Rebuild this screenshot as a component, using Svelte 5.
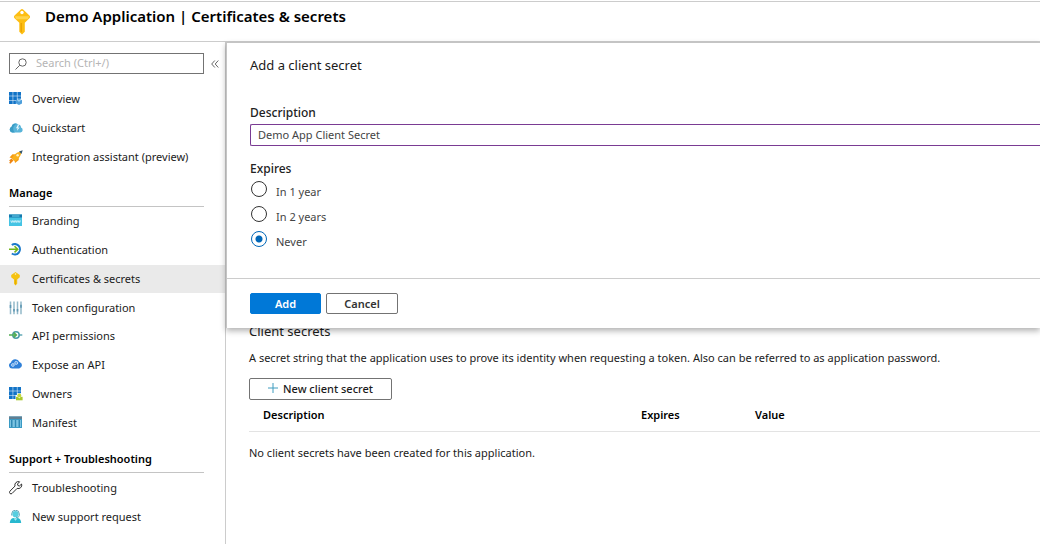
<script>
  const general = [
    { icon: 'overview', label: 'Overview' },
    { icon: 'cloud', label: 'Quickstart' },
    { icon: 'rocket', label: 'Integration assistant (preview)' }
  ];
  const manage = [
    { icon: 'www', label: 'Branding' },
    { icon: 'auth', label: 'Authentication' },
    { icon: 'key', label: 'Certificates & secrets', active: true },
    { icon: 'token', label: 'Token configuration' },
    { icon: 'api', label: 'API permissions' },
    { icon: 'expose', label: 'Expose an API' },
    { icon: 'owners', label: 'Owners' },
    { icon: 'manifest', label: 'Manifest' }
  ];
  const support = [
    { icon: 'wrench', label: 'Troubleshooting' },
    { icon: 'person', label: 'New support request' }
  ];
  const periods = ['In 1 year', 'In 2 years', 'Never'];

  let search = $state('');
  let description = $state('Demo App Client Secret');
  let expires = $state('Never');
</script>

{#snippet glyph(name)}
  <svg class="glyph" viewBox="0 0 14 14" aria-hidden="true">
    {#if name === 'overview' || name === 'owners'}
      <path fill="#1173c7" d="M0 0h3.700v3.700H0zM4.200 0h3.700v3.700H4.200zM8.400 0h3.600v3.700H8.400zM0 4.200h3.700v3.700H0zM4.200 4.200h3.700v3.700H4.200zM0 8.400h3.700v3.600H0z" />
      {#if name === 'overview'}
        <path fill="#1173c7" d="M8.400 4.200H12v2.600H8.400zM4.200 8.400h2.700v3.600H4.200z" />
        <path fill="#4e9fdb" d="M10 6.700l3 1.600v3.200L10 13.100l-3-1.600V8.300z" />
        <path fill="#9bd0f2" d="M10 7.600l2 1-2 1.100-2-1.100z" />
      {:else}
        <path fill="#1173c7" d="M8.400 4.200H12v2H8.400zM4.200 8.400h2.300v3.600H4.200z" />
        <path fill="#a9c82c" d="M7 13.300V9.800h6.600v3.500z" />
        <circle cx="10.300" cy="8.400" r="2" fill="#c3d83e" />
        <path fill="#eef5b5" d="M9 10h2.600l-1.300 1.600z" />
      {/if}
    {:else if name === 'cloud'}
      <path fill="#59b4d9" d="M3 11.500a3 3 0 0 1-.4-5.700A3.600 3.600 0 0 1 9 3.600 3 3 0 0 1 12 6.500a2.600 2.600 0 0 1-.5 5z" />
      <path fill="#3a9cc5" d="M3 11.500a3 3 0 0 1-.4-5.700A3.600 3.600 0 0 1 7.500 3 5 5 0 0 0 6 11.500z" />
      <path fill="#e8f6fc" d="M9 3.500L7 7.300h1.600L7.800 10l2.900-3.600H9L10.300 3.500z" />
    {:else if name === 'rocket'}
      <path fill="#f59b13" d="M.5 7.500l3-3.300 4 .2L3.800 8.600zM9.600 6.500l.2 3.500L6 13l-.6-3.500z" />
      <path fill="#f9b01c" d="M2.700 8.500C4.700 4.800 8 1.700 12.300 1.500 12.200 6 9.500 9.300 5.700 11.300z" />
      <path fill="#33566e" d="M10 1.400L13.700.2 12.500 4z" />
      <circle cx="8.600" cy="5.200" r="1.200" fill="#fff4c5" />
      <path stroke="#ee8412" stroke-width="1.600" d="M4 10L.7 13.300M3 9L.7 11.200" />
    {:else if name === 'www'}
      <path fill="#45c4e4" d="M0 .5h13v11.500H0z" />
      <path fill="#1778ad" d="M0 .5h13v3H0z" />
      <path fill="#4fb4d8" d="M3 1.200h7.500v1.600H3z" />
      <path fill="none" stroke="#d9f5fb" stroke-width=".8" d="M1.700 6.500l.8 2 .8-2 .8 2 .8-2M5.200 6.500l.6 2 .8-2 .8 2 .6-2M8.300 6.500l.8 2 .8-2 .8 2 .8-2" />
    {:else if name === 'auth'}
      <path fill="none" stroke="#1b7acb" stroke-width="2" d="M2.800 2A5.200 5.200 0 1 1 2.800 10.500" />
      <path fill="none" stroke="#72b51b" stroke-width="1.600" d="M0 6.300h8.500M5.500 3.200l3.200 3.100-3.200 3.100" />
    {:else if name === 'key'}
      <path fill="#f5c211" d="M6.500 0L10.800 3v2.200L8.200 7.500v4.300L6.500 13.500 5 11.800V7.500L2.200 5.200V3z" />
      <path fill="#dda400" d="M6 7.600h.7v5H6z" />
      <circle cx="6.500" cy="2" r=".8" fill="#fff6ce" />
    {:else if name === 'token'}
      <path stroke="#93b9c9" stroke-width="1.500" d="M1.500.5v12.700M5 .5v12.700M8.500.5v12.700M12 .5v12.700" />
      <path fill="#5e96b2" d="M.7 4h1.600v3H.7zM4.200 8h1.600v2.500H4.200zM7.700 8h1.600v2.500H7.700zM11.200 3.700h1.600v3h-1.600z" />
    {:else if name === 'api'}
      <circle cx="7" cy="6" r="3.200" fill="none" stroke="#4a9baa" stroke-width="1.500" />
      <path fill="none" stroke="#52ad54" stroke-width="1.500" d="M0 6h7M4.700 3.600L7.400 6 4.700 8.400" />
      <path stroke="#4a9baa" stroke-width="1.300" d="M10 6h3.300" />
    {:else if name === 'expose'}
      <path fill="#2f80d8" d="M3.100 10.500A3.100 3.100 0 0 1 2 4.500 4.600 4.600 0 0 1 10.500 3.900 3.400 3.400 0 0 1 10.200 10.500z" />
      <circle cx="3.900" cy="7" r="1.400" fill="#5d9fe8" stroke="#d5e8fb" stroke-width=".8" />
      <circle cx="7.200" cy="4.900" r="1.500" fill="#5d9fe8" stroke="#d5e8fb" stroke-width=".8" />
    {:else if name === 'manifest'}
      <path fill="#399ac4" d="M0 .5h13v11.500H0z" />
      <path fill="#617f92" d="M0 .5h13v2.500H0z" />
      <path fill="#7cc4e2" d="M1 4h11v7H1z" />
      <path fill="#2e88b4" d="M2 4h1.500v7H2zM5.800 4h1.400v7H5.800zM9.500 4h1.500v7H9.500z" />
    {:else if name === 'wrench'}
      <path fill="none" stroke="#303030" stroke-width="1" stroke-linejoin="round" d="M12.600 3l-2.200 2-1.500-.5L8.500 3l2.100-2.200A3.500 3.500 0 0 0 6 5.100L.9 10.200a1.500 1.500 0 0 0 2.200 2.200l5-5A3.500 3.500 0 0 0 12.600 3z" />
    {:else if name === 'person'}
      <path fill="#28b8cf" d="M.8 13c.2-3 1.500-4.400 3.400-4.900h4.600c2 .5 3.200 1.900 3.400 4.900z" />
      <circle cx="6.500" cy="4.200" r="3.100" fill="#58cee0" />
      <path fill="none" stroke="#5fa9bd" stroke-width="1" d="M2.700 5.500V4a3.800 3.800 0 0 1 7.600 0v1.500M10.300 5.500C10 7.300 8.500 7.600 7 7.600" />
      <path fill="#a7e9f0" d="M4.500 8.200h4l-2 2.500z" />
    {/if}
  </svg>
{/snippet}

{#snippet menu(items, kind)}
  <ul class={kind}>
    {#each items as item}
      <li class:active={item.active}>
        <a href="#{item.icon}" aria-current={item.active ? 'page' : undefined}>
          {@render glyph(item.icon)}
          {item.label}
        </a>
      </li>
    {/each}
  </ul>
{/snippet}

<div class="page">
  <header>
    <svg class="logo" viewBox="0 0 18 26" aria-hidden="true">
      <path fill="#fdbe12" d="M7.600.8a2 2 0 0 1 2.800 0l5.800 5.400a2.400 2.400 0 0 1 0 3.400l-4.400 4.200v9L9 25.600l-2.700-2.800v-9L1.800 9.600a2.400 2.400 0 0 1 0-3.400z" />
      <path fill="#ffd54a" d="M2 7.200h14l-1 3H3z" />
      <path fill="#e29a00" d="M7.700 14h1v9.500l-1-1z" />
      <circle cx="9" cy="3.500" r="1.700" fill="#fff" />
    </svg>
    <h1>Demo Application | Certificates &amp; secrets</h1>
  </header>

  <div class="body">
    <nav aria-label="Application">
      <div class="tools">
        <label class="search">
          <svg viewBox="0 0 12 12" aria-hidden="true">
            <circle cx="7.500" cy="4.500" r="3.700" />
            <path d="M4.800 7.200L.5 11.500" />
          </svg>
          <input type="text" placeholder="Search (Ctrl+/)" aria-label="Search" bind:value={search} />
        </label>
        <button class="collapse" type="button" aria-label="Collapse menu">
          <svg viewBox="0 0 8 8" aria-hidden="true"><path d="M3.800.5L.7 4l3.100 3.500M7.300.5L4.200 4l3.100 3.500" /></svg>
        </button>
      </div>
      {@render menu(general, 'general')}
      <h2>Manage</h2>
      {@render menu(manage, 'manage')}
      <h2>Support + Troubleshooting</h2>
      {@render menu(support, 'support')}
    </nav>

    <main>
      <h2>Client secrets</h2>
      <p>A secret string that the application uses to prove its identity when requesting a token. Also can be referred to as application password.</p>
      <button class="new" type="button">
        <svg viewBox="0 0 10 10" aria-hidden="true"><path d="M5 0v10M0 5h10" /></svg>
        New client secret
      </button>
      <table>
        <thead>
          <tr><th class="wide">Description</th><th class="mid">Expires</th><th>Value</th></tr>
        </thead>
        <tbody>
          <tr><td colspan="3">No client secrets have been created for this application.</td></tr>
        </tbody>
      </table>

      <form class="panel" onsubmit={(e) => e.preventDefault()}>
        <div class="fields">
          <h2>Add a client secret</h2>
          <label class="caption" for="description">Description</label>
          <input id="description" type="text" bind:value={description} />
          <fieldset>
            <legend class="caption">Expires</legend>
            {#each periods as period}
              <label class="choice">
                <input type="radio" name="expires" value={period} bind:group={expires} />
                <span>{period}</span>
              </label>
            {/each}
          </fieldset>
        </div>
        <div class="actions">
          <button class="primary" type="submit">Add</button>
          <button type="button">Cancel</button>
        </div>
      </form>
    </main>
  </div>
</div>

<style>
  :global(body) {
    margin: 0;
    background: #fff;
  }
  .page {
    min-height: 100vh;
    display: flex;
    flex-direction: column;
    box-sizing: border-box;
    padding-top: 1px;
    overflow: hidden;
    font: 11px/16px 'Noto Sans', 'Open Sans', sans-serif;
    color: #1b1b1b;
  }
  .page :is(input, button) {
    font: inherit;
    color: inherit;
    box-sizing: border-box;
    margin: 0;
  }
  h1, h2, p, ul {
    margin: 0;
    padding: 0;
  }
  header {
    display: flex;
    align-items: flex-start;
    gap: 14px;
    height: 41px;
    box-sizing: border-box;
    padding: 4px 13px 0;
    border-top: 1px solid #ccc;
    border-bottom: 1px solid #ccc;
  }
  .logo {
    width: 18px;
    height: 26px;
    margin-top: 3px;
  }
  h1 {
    font-size: 15px;
    line-height: 20px;
    font-weight: 600;
    color: #000;
  }
  .body {
    flex: 1;
    display: flex;
  }
  nav {
    flex: 0 0 225px;
    border-right: 1px solid #ccc;
  }
  .tools {
    display: flex;
    align-items: center;
    gap: 7px;
    padding: 11px 5px 11px 9px;
  }
  .search {
    flex: 1;
    display: flex;
    align-items: center;
    gap: 9px;
    height: 21px;
    box-sizing: border-box;
    border: 1px solid #737373;
    padding-left: 5px;
  }
  .search svg {
    width: 12px;
    height: 12px;
    flex: none;
  }
  .search svg, .collapse svg {
    fill: none;
    stroke: #666;
  }
  .search input {
    min-width: 0;
    width: 100%;
    border: 0;
    padding: 0 0 2px;
    outline: 0;
    background: none;
  }
  .search input::placeholder {
    color: #b5b5b5;
    opacity: 1;
  }
  .collapse {
    border: 0;
    padding: 0;
    background: none;
    width: 9px;
    height: 16px;
    display: flex;
    align-items: center;
  }
  .collapse svg {
    width: 8px;
    height: 8px;
  }
  ul {
    list-style: none;
    display: grid;
    grid-auto-rows: 1fr;
  }
  .general {
    min-height: 86px;
  }
  .manage {
    min-height: 230px;
  }
  .support {
    min-height: 58px;
  }
  li {
    display: grid;
  }
  li a {
    display: flex;
    align-items: center;
    gap: 9px;
    min-height: 28px;
    padding-left: 9px;
    color: inherit;
    text-decoration: none;
  }
  li.active {
    background: #eaeaea;
  }
  .glyph {
    width: 14px;
    height: 14px;
    flex: none;
  }
  nav h2 {
    font-size: 11px;
    line-height: 16px;
    font-weight: 600;
    color: #000;
    margin: 0 21px 0 9px;
    padding: 14px 0 5px;
    border-bottom: 1px solid #c4c4c4;
  }
  main {
    flex: 1;
    min-width: 0;
    position: relative;
    padding: 279px 0 0 23px;
  }
  main h2 {
    font-size: 13px;
    line-height: 20px;
    font-weight: 400;
  }
  main p {
    margin: 9px 0 12px;
    white-space: nowrap;
  }
  .page main button {
    height: 22px;
    border: 1px solid #737373;
    border-radius: 2px;
    background: #fff;
    font-weight: 500;
    padding: 0 18px;
  }
  .page main .new {
    display: flex;
    align-items: center;
    gap: 5px;
  }
  .new svg {
    width: 10px;
    height: 10px;
    margin-bottom: 2px;
    stroke: #3f9cbf;
  }
  table {
    width: 100%;
    table-layout: fixed;
    border-collapse: collapse;
    text-align: left;
  }
  th {
    font-weight: 600;
    color: #000;
    padding: 7px 0 8px;
    border-bottom: 1px solid #e3e3e3;
  }
  th.wide {
    width: 378px;
    padding-left: 14px;
  }
  th.mid {
    width: 114px;
  }
  td {
    padding: 13px 0;
  }
  .panel {
    position: absolute;
    inset: 0 0 auto 0;
    background: #fff;
    border-top: 1px solid #c4c4c4;
    border-left: 1px solid #c4c4c4;
    box-shadow: 0 3px 6px rgba(0, 0, 0, 0.3);
  }
  .fields {
    padding: 12px 0 26px 23px;
    border-bottom: 1px solid #ccc;
  }
  .caption {
    display: block;
    font-size: 12px;
    line-height: 16px;
    font-weight: 500;
    color: #222;
  }
  label.caption {
    margin: 30px 0 3px;
  }
  #description {
    display: block;
    width: 100%;
    height: 22px;
    padding: 0 7px 2px;
    border: 1px solid #7a3b93;
    border-right: 0;
    border-radius: 2px 0 0 2px;
    outline: 0;
    color: #444;
  }
  fieldset {
    border: 0;
    margin: 15px 0 0;
    padding: 0;
  }
  legend {
    padding: 0;
  }
  .choice {
    display: flex;
    align-items: flex-start;
    gap: 9px;
    height: 25px;
    color: #444;
  }
  .choice span {
    padding-top: 7px;
  }
  .choice input {
    appearance: none;
    width: 16px;
    height: 16px;
    margin: 4px 0 0 1px;
    border: 1px solid #333;
    border-radius: 50%;
  }
  .choice input:checked {
    border-color: #0067b8;
    background: radial-gradient(circle, #0067b8 3px, #fff 4px);
  }
  .actions {
    display: flex;
    gap: 5px;
    padding: 14px 23px;
  }
  .page .actions button {
    width: 72px;
    height: 21px;
    padding: 0;
    font-weight: 600;
    color: #333;
  }
  .page .actions .primary {
    width: 71px;
    background: #0078d7;
    border-color: #0078d7;
    color: #fff;
  }
</style>
